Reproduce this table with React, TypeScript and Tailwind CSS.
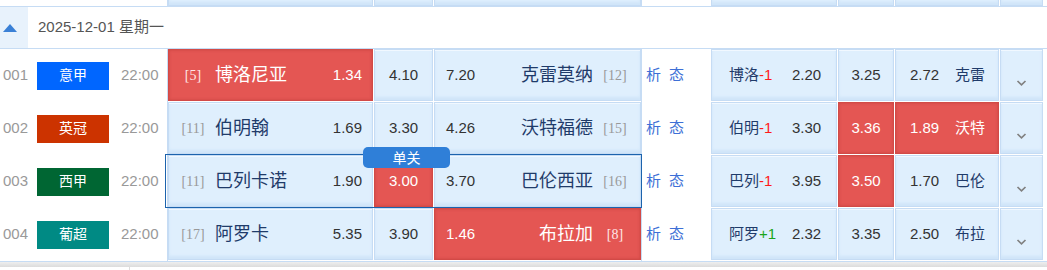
import React from "react";

type Row = {
  no: string;
  league: string;
  lc: string;
  hr: string;
  home: string;
  h: string;
  d: string;
  a: string;
  away: string;
  ar: string;
  sel: { h?: boolean; d?: boolean; a?: boolean };
  hcTeam: string;
  hc: string;
  h2: string;
  d2: string;
  a2: string;
  away2: string;
  sel2: { h?: boolean; d?: boolean; a?: boolean };
};

const rows: Row[] = [
  { no: "001", league: "意甲", lc: "#0066ff", hr: "[5]", home: "博洛尼亚", h: "1.34", d: "4.10", a: "7.20", away: "克雷莫纳", ar: "[12]", sel: { h: true }, hcTeam: "博洛", hc: "-1", h2: "2.20", d2: "3.25", a2: "2.72", away2: "克雷", sel2: {} },
  { no: "002", league: "英冠", lc: "#cc3300", hr: "[11]", home: "伯明翰", h: "1.69", d: "3.30", a: "4.26", away: "沃特福德", ar: "[15]", sel: {}, hcTeam: "伯明", hc: "-1", h2: "3.30", d2: "3.36", a2: "1.89", away2: "沃特", sel2: { d: true, a: true } },
  { no: "003", league: "西甲", lc: "#006633", hr: "[11]", home: "巴列卡诺", h: "1.90", d: "3.00", a: "3.70", away: "巴伦西亚", ar: "[16]", sel: { d: true }, hcTeam: "巴列", hc: "-1", h2: "3.95", d2: "3.50", a2: "1.70", away2: "巴伦", sel2: { d: true } },
  { no: "004", league: "葡超", lc: "#008a84", hr: "[17]", home: "阿罗卡", h: "5.35", d: "3.90", a: "1.46", away: "布拉加", ar: "[8]", sel: { a: true }, hcTeam: "阿罗", hc: "+1", h2: "2.32", d2: "3.35", a2: "2.50", away2: "布拉", sel2: {} },
];

const blueCell =
  "bg-[#dfeffd] border border-[#c6dcf4] shadow-[inset_0_1px_0_#f1f8ff,inset_0_-3px_3px_#d0e5f9]";
const redCell =
  "bg-[#e45653] border border-[#d24a47] shadow-[inset_0_0_3px_#c94441]";

function cellCls(sel?: boolean) {
  return sel ? redCell : blueCell;
}

function Chevron() {
  return (
    <svg width="11" height="6" viewBox="0 0 11 6" className="mt-[15px]">
      <path d="M1.5 1 L5.5 4.8 L9.5 1" fill="none" stroke="#808080" strokeWidth="1.7" />
    </svg>
  );
}

function TopStrip() {
  return (
    <div className="flex h-[6px] overflow-hidden">
      <div className="w-[167px] bg-white" />
      <div className="w-px bg-[#c6dcf4]" />
      <div className="flex gap-px items-end">
        <div className={`w-[205px] h-[12px] -mt-[6px] ${blueCell}`} />
        <div className={`w-[59px] h-[12px] -mt-[6px] ${blueCell}`} />
        <div className={`w-[207px] h-[12px] -mt-[6px] ${blueCell}`} />
      </div>
      <div className="w-px bg-[#c6dcf4]" />
      <div className="w-[69px] bg-white" />
      <div className="flex gap-px">
        <div className={`w-[126px] h-[12px] -mt-[6px] ${blueCell}`} />
        <div className={`w-[56px] h-[12px] -mt-[6px] ${blueCell}`} />
        <div className={`w-[104px] h-[12px] -mt-[6px] ${blueCell}`} />
        <div className={`w-[43px] h-[12px] -mt-[6px] ${blueCell}`} />
      </div>
    </div>
  );
}

function MatchRow({ r, idx }: { r: Row; idx: number }) {
  const nameCls = (sel?: boolean) => (sel ? "text-white" : "text-[#1f3b6a]");
  const oddCls = (sel?: boolean) => (sel ? "text-white" : "text-[#333333]");
  const rankCls = (sel?: boolean) => (sel ? "text-[#ffe6e6]" : "text-[#999999]");
  return (
    <div className="relative flex h-[53px]">
      <div className="w-[167px] flex items-center pl-[3px] bg-white">
        <span className="w-[34px] text-[15px] text-[#999999]">{r.no}</span>
        <span
          className="w-[72px] h-[28px] flex items-center justify-center text-white text-[14px]"
          style={{ backgroundColor: r.lc }}
        >
          {r.league}
        </span>
        <span className="ml-[12px] text-[15px] text-[#999999]">22:00</span>
      </div>
      <div className="w-px bg-[#c6dcf4]" />
      <div className="flex gap-px h-[52px]">
        <div className={`w-[205px] flex items-center ${cellCls(r.sel.h)}`}>
          <span
            className={`w-[26px] ml-[11px] text-center text-[14px] ${rankCls(r.sel.h)}`}
            style={{ fontFamily: '"Liberation Serif", serif' }}
          >
            {r.hr}
          </span>
          <span className={`ml-[9px] text-[18px] ${nameCls(r.sel.h)}`}>{r.home}</span>
          <span className={`ml-auto mr-[10px] text-[15px] ${oddCls(r.sel.h)}`}>{r.h}</span>
        </div>
        <div className={`w-[59px] flex items-center justify-center text-[15px] ${cellCls(r.sel.d)} ${oddCls(r.sel.d)}`}>
          {r.d}
        </div>
        <div className={`w-[207px] flex items-center ${cellCls(r.sel.a)}`}>
          <span className={`ml-[11px] text-[15px] ${oddCls(r.sel.a)}`}>{r.a}</span>
          <span className={`ml-auto mr-[9px] text-[18px] ${nameCls(r.sel.a)}`}>{r.away}</span>
          <span
            className={`w-[26px] mr-[12px] text-center text-[14px] ${rankCls(r.sel.a)}`}
            style={{ fontFamily: '"Liberation Serif", serif' }}
          >
            {r.ar}
          </span>
        </div>
      </div>
      <div className="w-px bg-[#c6dcf4]" />
      <div className="w-[69px] flex items-center pl-[4px] gap-[8px] text-[15px] text-[#3d6fd6] bg-white">
        <span>析</span>
        <span>态</span>
      </div>
      <div className="flex gap-px h-[52px]">
        <div className={`w-[126px] flex items-center ${blueCell}`}>
          <span className="w-[63px] ml-[17px] text-[15px] text-[#1f3b6a]">
            {r.hcTeam}
            <span className={r.hc.startsWith("+") ? "text-[#1aa51a]" : "text-[#ff1a1a]"}>{r.hc}</span>
          </span>
          <span className="text-[15px] text-[#333333]">{r.h2}</span>
        </div>
        <div className={`w-[56px] flex items-center justify-center text-[15px] ${cellCls(r.sel2.d)} ${oddCls(r.sel2.d)}`}>
          {r.d2}
        </div>
        <div className={`w-[104px] flex items-center ${cellCls(r.sel2.a)}`}>
          <span className={`w-[45px] ml-[14px] text-[15px] ${oddCls(r.sel2.a)}`}>{r.a2}</span>
          <span className={`text-[15px] ${nameCls(r.sel2.a)}`}>{r.away2}</span>
        </div>
        <div className={`w-[43px] flex justify-center items-center ${blueCell}`}>
          <Chevron />
        </div>
      </div>
      {idx === 2 && (
        <>
          <div className="absolute left-[165px] top-[-1px] w-[477px] h-[54px] border border-[#1c63ad] pointer-events-none" />
          <div className="absolute left-[363px] top-[-8px] w-[87px] h-[21px] rounded-[5px] bg-[#2f7fd8] text-white text-[14px] flex items-center justify-center leading-none">
            单关
          </div>
        </>
      )}
    </div>
  );
}

export default function App() {
  return (
    <div
      className="w-[1047px] h-[270px] overflow-hidden bg-white relative"
      style={{ fontFamily: '"Liberation Sans", "Noto Sans CJK SC", sans-serif' }}
    >
      <TopStrip />
      <div className="h-px bg-[#c6dcf4]" />
      <div className="flex h-[41px] items-center">
        <div className="w-[28px] h-full bg-[#e8f2fc] flex items-center pl-[3px]">
          <svg width="14" height="8" viewBox="0 0 14 8">
            <path d="M0 8 L7 0 L14 8 Z" fill="#3a80d6" />
          </svg>
        </div>
        <span className="ml-[10px] text-[15px] text-[#555555]">2025-12-01 星期一</span>
      </div>
      <div className="h-px bg-[#c6dcf4]" />
      {rows.map((r, i) => (
        <MatchRow key={r.no} r={r} idx={i} />
      ))}
      <div className="h-px bg-[#c6dcf4]" />
      <div className="h-[5px] bg-gradient-to-b from-[#eeeeee] to-[#dcdcdc]" />
      <div className="flex h-[10px]">
        <div className="w-[130px] border-r border-[#dddddd]" />
      </div>
    </div>
  );
}
